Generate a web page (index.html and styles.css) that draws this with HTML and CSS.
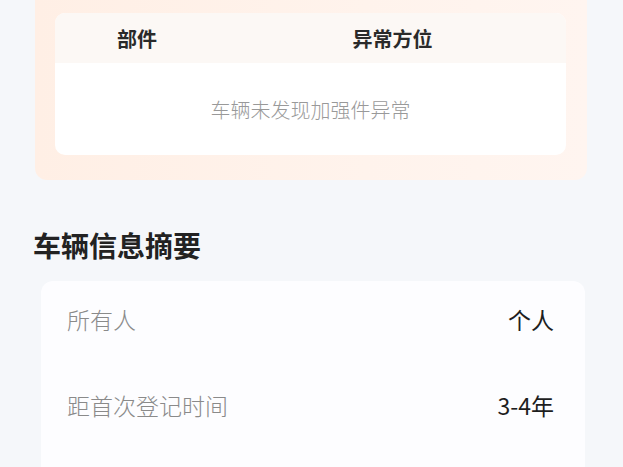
FILE: index.html
```html
<!DOCTYPE html>
<html lang="zh-CN">
<head>
  <meta charset="UTF-8">
  <meta name="viewport" content="width=device-width, initial-scale=1.0">
  <title>车辆信息</title>
  <link rel="stylesheet" href="styles.css">
</head>
<body>
  <!-- 加强件检测 -->
  <div class="report-card">
    <div class="part-table">
      <div class="table-head">
        <div class="cell">部件</div>
        <div class="cell">异常方位</div>
      </div>
      <div class="table-empty">车辆未发现加强件异常</div>
    </div>
  </div>

  <!-- 车辆信息摘要 -->
  <h2 class="section-title">车辆信息摘要</h2>
  <div class="info-card">
    <div class="info-row">
      <span class="info-label">所有人</span>
      <span class="info-value">个人</span>
    </div>
    <div class="info-row">
      <span class="info-label">距首次登记时间</span>
      <span class="info-value">3-4年</span>
    </div>
  </div>
</body>
</html>
```

FILE: styles.css
```css
* {
  margin: 0;
  padding: 0;
  box-sizing: border-box;
}
body {
  font-family: "Noto Sans CJK SC", "Noto Sans", sans-serif;
  background: #f5f7fa;
  color: #222;
  overflow: hidden;
}
.report-card {
  margin: 0 36px 0 35px;
  padding: 13px 21px 25px 20px;
  background: linear-gradient(90deg, #ffefe5, #fff3ec 60%, #fff5f0);
  border-radius: 0 0 12px 12px;
}
.part-table {
  background: #fff;
  border-radius: 10px;
  overflow: hidden;
}
.table-head {
  display: grid;
  grid-template-columns: 164px 1fr;
  height: 50px;
  align-items: center;
  background: #fcf8f5;
}
.table-head .cell {
  text-align: center;
  font-size: 20px;
  font-weight: bold;
  color: #2a2a2a;
}
.table-empty {
  height: 92px;
  display: flex;
  align-items: center;
  justify-content: center;
  font-size: 20px;
  font-weight: 300;
  color: #999;
}
.section-title {
  margin: 47px 0 18px 33px;
  font-size: 28px;
  line-height: 36px;
  font-weight: bold;
  color: #222;
}
.info-card {
  margin: 0 38px 0 41px;
  padding: 0 31px 80px 26px;
  background: #fdfdff;
  border-radius: 12px;
  display: flex;
  flex-direction: column;
  gap: 10px;
}
.info-row {
  height: 76px;
  display: flex;
  align-items: center;
  justify-content: space-between;
  font-size: 23px;
  line-height: 1;
}
.info-label {
  color: #8a8a8a;
  font-weight: 300;
}
.info-value {
  color: #1e1e1e;
}
```
